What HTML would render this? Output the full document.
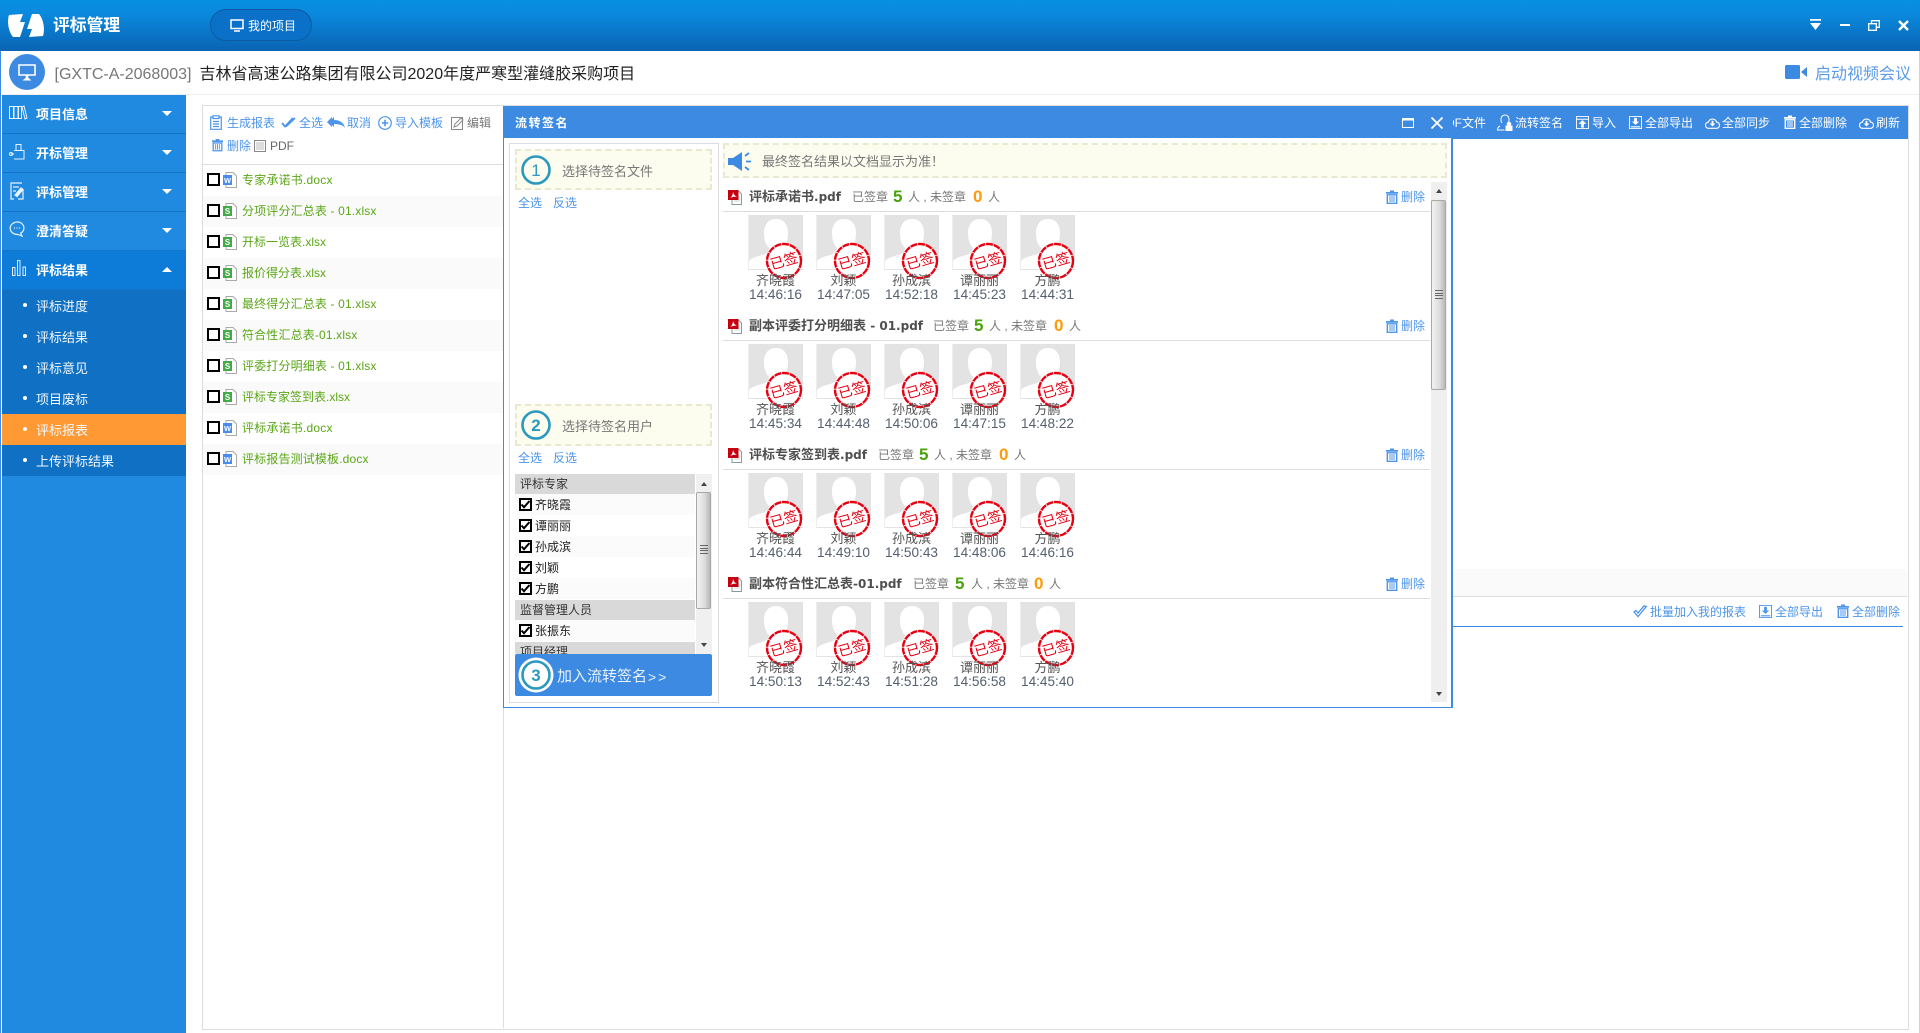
<!DOCTYPE html>
<html lang="zh"><head><meta charset="utf-8"><title>评标管理</title>
<style>
html,body{margin:0;padding:0}
body{position:relative;width:1920px;height:1033px;overflow:hidden;background:#fff;font-family:"Liberation Sans","Noto Sans CJK SC",sans-serif;font-size:12px;color:#555}
div,span,svg{position:absolute}
span.n,b.n,i.n{position:static}
.t{white-space:nowrap;line-height:16px;height:16px}
.w{color:#fff}.bl{color:#4c95ea}
svg{display:block;overflow:visible}
.m{left:2px;width:184px;height:38px;background:#2089e0;border-bottom:1px solid #1273c9}
.m .t{left:34px;top:12px;color:#fff;font-size:13px;font-weight:bold}
.m .a{left:160px;top:16px;width:0;height:0;border-left:5px solid transparent;border-right:5px solid transparent;border-top:5px solid #fff}
.m svg{left:7px;top:9px}
.s{left:2px;width:184px;height:31px;background:#0f70c4}
.s .t{left:34px;top:9px;color:#f2f8fd;font-size:13px}
.s:before{content:"";position:absolute;left:21px;top:13px;width:4px;height:4px;border-radius:50%;background:#fff}
.r{left:203px;width:300px;height:31px}
.r.e{background:#fafafa}
.cb{left:4px;top:8px;width:9px;height:9px;border:2px solid #000;background:#fff}
.r svg{left:20px;top:7px}
.r .t{left:39px;top:7px;color:#5ba616}
.st{color:#777;font-size:12px}
.sec{left:0;top:0;width:1920px;height:0}
.h{left:723px;top:14px;width:707px;height:1px;background:#ddd}
.tt{left:749px;top:-8px;color:#4f4f4f;font-size:13px;font-weight:bold}
.tt em{font:bold 12px "DejaVu Sans",sans-serif}
.g{color:#4aa30c;font-size:17px;font-weight:bold;top:-8px}
.o{color:#ff9a0a;font-size:17px;font-weight:bold;top:-8px}
.d{left:1401px;top:-8px;color:#4c95ea}
.p{top:18px;width:55px;height:90px}
.p .nm{left:-10px;width:75px;text-align:center;top:58px;font-size:13px;color:#555}
.p .tm{left:-10px;width:75px;text-align:center;top:72px;font-size:13.6px;color:#556070}
.ul{left:515px;width:180px;height:21px}
.gr{background:#d9d9d9;height:20px;color:#333}
.ul .t{left:20px;top:3px;color:#222}
.gr .t{left:5px;top:2px;color:#333}
.ul .c{left:4px;top:4px;width:9px;height:9px;border:2px solid #000;background:#fff}
.alt{background:#fbfbfb}
.yb{left:515px;width:193px;background:#fcfcef;border:2px dashed #e9e9d2}
.thumb{background:linear-gradient(90deg,#f2f2f2,#dedede 55%,#b9b9b9);border:1px solid #a8a8a8;border-radius:2px;box-sizing:border-box}
.grip{width:8px;height:7px;border-top:1px solid #666;border-bottom:1px solid #666}
.grip:after{content:"";position:absolute;left:0;top:2px;width:8px;height:1px;background:#666;box-shadow:0 2px 0 #666}
</style></head><body>
<svg width="0" height="0" style="left:0;top:0">
<defs>
<symbol id="ph" viewBox="0 0 55 55" overflow="visible"><rect width="55" height="55" fill="#e3e3e3"/><path d="M1 54V47c0-3 6-5 13-7 4-1 7-3 7-7-3-3-5-8-5-15 0-9 5-14 12-14s12 5 12 14c0 7-2 12-5 15 0 4 3 6 7 7 7 2 13 4 13 7v7z" fill="#fff"/><path d="M.5 55V.5" stroke="#eee"/></symbol>
<symbol id="tr" viewBox="0 0 12 14"><path d="M4 .5h4v1.500h4v1.800H0V2h4z" fill="currentColor"/><path d="M1.300 4.800h9.400V13.300H1.300z" fill="none" stroke="currentColor" stroke-width="1.400"/><path d="M4 6v6M6 6v6M8 6v6" stroke="currentColor"/></symbol>
<symbol id="pd" viewBox="0 0 14 16"><path d="M4 2.500h7l2.500 2.500v10.500H4z" fill="#fff" stroke="#8a9a9e"/><path d="M6 8h6M6 10h6M6 12h6" stroke="#c9d4d6"/><rect y="1" width="10.500" height="10" fill="#c40010"/><path d="M2 9c2-1 3-4 3-6.500 .5 3 2 4.500 4 5-2.500 0-5 .5-7 1.500z" fill="#fff"/></symbol>
<symbol id="xl" viewBox="0 0 14 16"><path d="M3 .5h7l3.500 3.500v11.500H3z" fill="#fff" stroke="#a9a9a9"/><rect y="3" width="9" height="10" fill="#41ab47"/><text x="4.500" y="11" font-size="8" font-weight="bold" text-anchor="middle" fill="#fff" font-family="Liberation Sans">S</text></symbol>
<symbol id="wd" viewBox="0 0 14 16"><path d="M3 .5h7l3.500 3.500v11.500H3z" fill="#fff" stroke="#a9a9a9"/><rect y="3" width="9" height="10" fill="#4a8bee"/><text x="4.500" y="11" font-size="7.500" font-weight="bold" text-anchor="middle" fill="#fff" font-family="Liberation Sans">W</text></symbol>
<symbol id="ex" viewBox="0 0 14 14"><path d="M.5.500h13v13H.5z" fill="none" stroke="currentColor"/><path d="M5.500 2h3v4H11L7 9.500 3 6h2.500zM2 11h10v1.200H2z" fill="currentColor"/></symbol>
<symbol id="cl" viewBox="0 0 16 13"><path d="M4 12.300a3.400 3.400 0 0 1-.4-6.800 4.600 4.600 0 0 1 8.800 0 3.400 3.400 0 0 1-.4 6.800z" fill="none" stroke="currentColor" stroke-width="1.200"/><path d="M7 4h2v3h2.200L8 10.300 4.800 7H7z" fill="currentColor"/></symbol>
</defs></svg>

<!-- top bar -->
<div style="left:0;top:0;width:1920px;height:51px;background:linear-gradient(#078fe2,#0a8ade 25%,#0a64b3)"></div>
<svg style="left:7px;top:13px" width="38" height="25" viewBox="0 0 38 25"><path d="M2 2 16 1 13 9 18 9 13 24 6 24C1 18 0 8 2 2z" fill="#fff"/><path d="M36 23 22 24 25 16 20 16 25 1 32 1C37 7 38 17 36 23z" fill="#fff"/></svg>
<div class="t w" style="left:53px;top:17px;font-size:16.800px;font-weight:bold;line-height:18px;height:18px">评标管理</div>
<div style="left:210px;top:9px;width:100px;height:30px;border:1px solid #0a5ba3;border-radius:16px;background:#0b71c8"></div>
<svg style="left:230px;top:19px" width="14" height="13" viewBox="0 0 14 13"><path d="M1 1h12v8.500H1z" fill="none" stroke="#fff" stroke-width="1.500"/><path d="M4 12h6" stroke="#fff" stroke-width="1.500"/></svg>
<div class="t w" style="left:248px;top:18px">我的项目</div>
<svg style="left:1810px;top:19px" width="11" height="12" viewBox="0 0 11 12"><path d="M0 0h11v1.800H0zM0 4h11L5.500 11z" fill="#fff"/></svg>
<div style="left:1840px;top:24px;width:10px;height:2px;background:#fff"></div>
<svg style="left:1868px;top:20px" width="12" height="11" viewBox="0 0 12 11"><path d="M.7 3.700h7.600v6.600H.7zM3.500 3.500V.7h7.800v6.600H8.500" fill="none" stroke="#fff" stroke-width="1.300"/></svg>
<svg style="left:1898px;top:20px" width="11" height="11" viewBox="0 0 11 11"><path d="M1 1l9 9M10 1l-9 9" stroke="#fff" stroke-width="2.400"/></svg>

<!-- subheader -->
<div style="left:0;top:51px;width:1px;height:982px;background:#3d8ae2"></div>
<div style="left:1919px;top:51px;width:1px;height:982px;background:#bcd6f3"></div>
<div style="left:2px;top:94px;width:1917px;height:1px;background:#eee"></div>
<div style="left:9px;top:54px;width:36px;height:36px;border-radius:50%;background:#3d8ae2"></div>
<svg style="left:18px;top:64px" width="18" height="18" viewBox="0 0 18 18"><path d="M1 1h16v10H1z" fill="none" stroke="#fff" stroke-width="1.600"/><path d="M8 11h2l.5 3 3 2.500h-9l3-2.500z" fill="#fff"/></svg>
<div class="t" style="left:54.500px;top:66px;font-size:16px;color:#777;line-height:18px;height:18px">[GXTC-A-2068003]</div>
<div class="t" style="left:199.500px;top:66px;font-size:16px;color:#222;line-height:18px;height:18px">吉林省高速公路集团有限公司2020年度严寒型灌缝胶采购项目</div>
<svg style="left:1785px;top:65px" width="22" height="14" viewBox="0 0 22 14"><rect width="15" height="14" rx="1.500" fill="#3d8ae2"/><path d="M16 7l6-5v10z" fill="#3d8ae2"/></svg>
<div class="t" style="left:1815px;top:66px;font-size:16px;color:#5b9be8;line-height:18px;height:18px">启动视频会议</div>

<!-- sidebar -->
<div style="left:2px;top:95px;width:184px;height:938px;background:#2089e0"></div>
<div class="m" style="top:95px"><div class="t">项目信息</div><div class="a"></div><svg width="18" height="16" viewBox="0 0 18 16" fill="none" stroke="#e8f2fc"><path d="M.5 2.500h4v12h-4zM5 2.500h4v12H5zM9.500 2.500h3v12h-3zM13 3l2-1 3 12-2 1z"/></svg></div>
<div class="m" style="top:134px"><div class="t">开标管理</div><div class="a"></div><svg width="18" height="18" viewBox="0 0 18 18" fill="none" stroke="#e8f2fc"><path d="M7 7V1.500h5V7M5 7.500h10v8.500H5M5 11H2"/><circle cx="2" cy="11" r="1.500"/></svg></div>
<div class="m" style="top:173px"><div class="t">评标管理</div><div class="a"></div><svg width="14" height="18" viewBox="0 0 14 18" style="left:8px" fill="none" stroke="#e8f2fc" stroke-width="1.200"><path d="M12 1H1v16h3M13 7v10H8"/><path d="M5 13l6-7 2 1.500-6 7z" fill="#e8f2fc"/><path d="M3 5h6M3 9h3"/></svg></div>
<div class="m" style="top:212px"><div class="t">澄清答疑</div><div class="a"></div><svg width="16" height="16" viewBox="0 0 16 16" fill="none" stroke="#e8f2fc" stroke-width="1.200"><path d="M8 1a7 6 0 1 0 1 12.500l4 1.500-1.300-2.800A6.500 6 0 0 0 8 1z"/><path d="M5 7h1M7.500 7h1M10 7h1"/></svg></div>
<div class="m" style="top:251px;background:#0d7bd8"><div class="t">评标结果</div><div class="a" style="border-top:0;border-bottom:5px solid #fff"></div><svg width="14" height="16" viewBox="0 0 14 16" style="left:10px" fill="none" stroke="#dcecfb"><path d="M.5 7.500h2.500v8H.5zM5.500 .5H8v15H5.500zM11 7h2.500v8.500H11z"/></svg></div>
<div class="s" style="top:290px"><div class="t">评标进度</div></div>
<div class="s" style="top:321px"><div class="t">评标结果</div></div>
<div class="s" style="top:352px"><div class="t">评标意见</div></div>
<div class="s" style="top:383px"><div class="t">项目废标</div></div>
<div class="s" style="top:414px;background:#ff9933"><div class="t">评标报表</div></div>
<div class="s" style="top:445px"><div class="t">上传评标结果</div></div>

<!-- main panel -->
<div style="left:202px;top:105px;width:1705px;height:923px;border:1px solid #ddd"></div>
<div style="left:503px;top:139px;width:1px;height:889px;background:#ddd"></div>
<div style="left:203px;top:164px;width:300px;height:1px;background:#ddd"></div>
<div style="left:1453px;top:106px;width:455px;height:33px;background:#3d8ae2"></div>
<div class="t w" style="left:1453px;top:115px;width:33px;overflow:hidden;text-align:right;direction:rtl">PDF文件</div>
<svg style="left:1497px;top:114px" width="16" height="17" viewBox="0 0 16 17" fill="none" stroke="#fff"><path d="M3 12C1 13 .5 15 .5 16h7M5 9C3 6 4 1 8 1s5 5 3 8"/><path d="M9 12h6v4.500H9z" fill="#fff"/><circle cx="12" cy="10" r="1.800" fill="#fff"/></svg>
<div class="t w" style="left:1515px;top:115px">流转签名</div>
<svg style="left:1576px;top:116px;color:#fff" width="13" height="13" viewBox="0 0 14 14" fill="none" stroke="#fff"><path d="M.5.500h13v13H.5zM1 3.500h12"/><path d="M7 5l3 3H8v4H6V8H4z" fill="#fff"/></svg>
<div class="t w" style="left:1592px;top:115px">导入</div>
<svg style="left:1629px;top:116px;color:#fff" width="13" height="13"><use href="#ex"/></svg>
<div class="t w" style="left:1645px;top:115px">全部导出</div>
<svg style="left:1705px;top:117px;color:#fff" width="15" height="12"><use href="#cl"/></svg>
<div class="t w" style="left:1722px;top:115px">全部同步</div>
<svg style="left:1784px;top:115px;color:#fff" width="12" height="14"><use href="#tr"/></svg>
<div class="t w" style="left:1799px;top:115px">全部删除</div>
<svg style="left:1859px;top:117px;color:#fff" width="15" height="12"><use href="#cl"/></svg>
<div class="t w" style="left:1876px;top:115px">刷新</div>

<!-- right below modal -->
<div style="left:1452px;top:569px;width:455px;height:27px;background:#fafafa"></div>
<div style="left:1452px;top:596px;width:455px;height:1px;background:#ddd"></div>
<svg style="left:1633px;top:605px" width="14" height="13" viewBox="0 0 14 13" fill="none" stroke="#4c95ea" stroke-width="1.300"><path d="M1 7l4 4.500L13.300 1.500 11 .9 5 8 3 5.500z"/></svg>
<div class="t bl" style="left:1650px;top:604px">批量加入我的报表</div>
<svg style="left:1759px;top:605px;color:#4c95ea" width="13" height="13"><use href="#ex"/></svg>
<div class="t bl" style="left:1775px;top:604px">全部导出</div>
<svg style="left:1837px;top:604px;color:#4c95ea" width="12" height="14"><use href="#tr"/></svg>
<div class="t bl" style="left:1852px;top:604px">全部删除</div>
<div style="left:1452px;top:626px;width:451px;height:1px;background:#3d8ae2"></div>

<!-- left file list -->
<svg style="left:210px;top:115px;color:#4c95ea" width="12" height="15" viewBox="0 0 12 15" fill="none" stroke="#4c95ea" stroke-width="1.200"><path d="M3 2H.7v12.300h10.600V2H9M3 .8h6v2.700H3zM3 6.500h6M3 9h6M3 11.500h6"/></svg>
<div class="t bl" style="left:227px;top:115px">生成报表</div>
<svg style="left:281px;top:117px" width="15" height="11" viewBox="0 0 15 11" fill="none" stroke="#4c95ea" stroke-width="1.800"><path d="M1 6l3 3.500L12 1M5 9.500L14 1"/></svg>
<div class="t bl" style="left:299px;top:115px">全选</div>
<svg style="left:329px;top:117px" width="16" height="11" viewBox="0 0 16 11"><path d="M5 0v3c6 0 10 3 11 8-2-3-6-4-11-4v3L0 5z" fill="#4c95ea"/><path d="M3 0v2L1 5l2 3v2L-2 5z" fill="#4c95ea"/></svg>
<div class="t bl" style="left:347px;top:115px">取消</div>
<svg style="left:378px;top:116px" width="14" height="14" viewBox="0 0 14 14" fill="none" stroke="#4c95ea" stroke-width="1.200"><circle cx="7" cy="7" r="6.300"/><path d="M3.800 7h6.400M7 3.800v6.400" stroke-width="1.600"/></svg>
<div class="t bl" style="left:395px;top:115px">导入模板</div>
<svg style="left:451px;top:116px" width="13" height="14" viewBox="0 0 13 14" fill="none" stroke="#888"><path d="M.5 1.500h11v12H.5z"/><path d="M3 11l1-3 6-6 2 2-6 6z" fill="#fff"/></svg>
<div class="t" style="left:467px;top:115px;color:#777">编辑</div>
<svg style="left:212px;top:138px;color:#4c95ea" width="11" height="14"><use href="#tr"/></svg>
<div class="t bl" style="left:227px;top:138px">删除</div>
<div style="left:254px;top:140px;width:10px;height:10px;border:1px solid #888;background:#ddd;box-shadow:inset 0 0 0 1px #fff"></div>
<div class="t" style="left:270px;top:138px;color:#666">PDF</div>

<div class="r" style="top:165px"><div class="cb"></div><svg width="14" height="16"><use href="#wd"/></svg><div class="t" style="letter-spacing:.2px">专家承诺书.docx</div></div>
<div class="r e" style="top:196px"><div class="cb"></div><svg width="14" height="16"><use href="#xl"/></svg><div class="t" style="letter-spacing:.15px">分项评分汇总表 - 01.xlsx</div></div>
<div class="r" style="top:227px"><div class="cb"></div><svg width="14" height="16"><use href="#xl"/></svg><div class="t">开标一览表.xlsx</div></div>
<div class="r e" style="top:258px"><div class="cb"></div><svg width="14" height="16"><use href="#xl"/></svg><div class="t">报价得分表.xlsx</div></div>
<div class="r" style="top:289px"><div class="cb"></div><svg width="14" height="16"><use href="#xl"/></svg><div class="t" style="letter-spacing:.15px">最终得分汇总表 - 01.xlsx</div></div>
<div class="r e" style="top:320px"><div class="cb"></div><svg width="14" height="16"><use href="#xl"/></svg><div class="t" style="letter-spacing:.15px">符合性汇总表-01.xlsx</div></div>
<div class="r" style="top:351px"><div class="cb"></div><svg width="14" height="16"><use href="#xl"/></svg><div class="t" style="letter-spacing:.15px">评委打分明细表 - 01.xlsx</div></div>
<div class="r e" style="top:382px"><div class="cb"></div><svg width="14" height="16"><use href="#xl"/></svg><div class="t">评标专家签到表.xlsx</div></div>
<div class="r" style="top:413px"><div class="cb"></div><svg width="14" height="16"><use href="#wd"/></svg><div class="t" style="letter-spacing:.2px">评标承诺书.docx</div></div>
<div class="r e" style="top:444px"><div class="cb"></div><svg width="14" height="16"><use href="#wd"/></svg><div class="t" style="letter-spacing:.15px">评标报告测试模板.docx</div></div>

<!-- modal -->
<div style="left:503px;top:106px;width:947px;height:600px;background:#fff;border:1px solid #3d8ae2;border-right-width:2px"></div>
<div style="left:503px;top:106px;width:950px;height:32px;background:#3d8ae2"></div>
<div class="t w" style="left:515px;top:115px;font-weight:bold;letter-spacing:1.500px">流转签名</div>
<svg style="left:1402px;top:118px" width="12" height="10" viewBox="0 0 12 10" fill="none" stroke="#fff"><path d="M.5.500h11v9H.5z"/><path d="M0 1.500h12" stroke-width="2"/></svg>
<svg style="left:1431px;top:117px" width="12" height="12" viewBox="0 0 12 12"><path d="M.5.500l11 11M11.500.5l-11 11" stroke="#fff" stroke-width="1.800"/></svg>

<div style="left:509px;top:143px;width:208px;height:558px;border:1px solid #ddd"></div>
<div class="yb" style="top:149px;height:37px"></div>
<svg style="left:521px;top:155px" width="30" height="30" viewBox="0 0 30 30"><circle cx="15" cy="15" r="13.500" fill="none" stroke="#2b98bd" stroke-width="2.600"/><text x="15" y="21" text-anchor="middle" font-size="17" fill="#2b98bd" font-family="Liberation Sans">1</text></svg>
<div class="t" style="left:562px;top:164px;font-size:13px;color:#777">选择待签名文件</div>
<div class="t bl" style="left:518px;top:195px">全选</div>
<div class="t bl" style="left:553px;top:195px">反选</div>
<div class="yb" style="top:404px;height:38px"></div>
<svg style="left:521px;top:410px" width="30" height="30" viewBox="0 0 30 30"><circle cx="15" cy="15" r="13.500" fill="none" stroke="#2b98bd" stroke-width="2.600"/><text x="15" y="21" text-anchor="middle" font-size="17" font-weight="bold" fill="#2b98bd" font-family="Liberation Sans">2</text></svg>
<div class="t" style="left:562px;top:419px;font-size:13px;color:#777">选择待签名用户</div>
<div class="t bl" style="left:518px;top:450px">全选</div>
<div class="t bl" style="left:553px;top:450px">反选</div>

<div style="left:515px;top:474px;width:197px;height:180px;overflow:hidden">
<div class="ul gr" style="left:0;top:0"><div class="t">评标专家</div></div>
<div class="ul alt" style="left:0;top:20px"><div class="c"></div><svg style="left:5px;top:5px" width="11" height="11" viewBox="0 0 11 11"><path d="M1.500 5.500l2.500 2.700L9.500 2" fill="none" stroke="#000" stroke-width="2"/></svg><div class="t">齐晓霞</div></div>
<div class="ul" style="left:0;top:41px"><div class="c"></div><svg style="left:5px;top:5px" width="11" height="11" viewBox="0 0 11 11"><path d="M1.500 5.500l2.500 2.700L9.500 2" fill="none" stroke="#000" stroke-width="2"/></svg><div class="t">谭丽丽</div></div>
<div class="ul alt" style="left:0;top:62px"><div class="c"></div><svg style="left:5px;top:5px" width="11" height="11" viewBox="0 0 11 11"><path d="M1.500 5.500l2.500 2.700L9.500 2" fill="none" stroke="#000" stroke-width="2"/></svg><div class="t">孙成滨</div></div>
<div class="ul" style="left:0;top:83px"><div class="c"></div><svg style="left:5px;top:5px" width="11" height="11" viewBox="0 0 11 11"><path d="M1.500 5.500l2.500 2.700L9.500 2" fill="none" stroke="#000" stroke-width="2"/></svg><div class="t">刘颖</div></div>
<div class="ul alt" style="left:0;top:104px"><div class="c"></div><svg style="left:5px;top:5px" width="11" height="11" viewBox="0 0 11 11"><path d="M1.500 5.500l2.500 2.700L9.500 2" fill="none" stroke="#000" stroke-width="2"/></svg><div class="t">方鹏</div></div>
<div class="ul gr" style="left:0;top:126px"><div class="t">监督管理人员</div></div>
<div class="ul alt" style="left:0;top:146px"><div class="c"></div><svg style="left:5px;top:5px" width="11" height="11" viewBox="0 0 11 11"><path d="M1.500 5.500l2.500 2.700L9.500 2" fill="none" stroke="#000" stroke-width="2"/></svg><div class="t">张振东</div></div>
<div class="ul gr" style="left:0;top:168px"><div class="t">项目经理</div></div>
<div style="left:181px;top:0;width:16px;height:180px;background:#f0f0f0"></div>
<div style="left:186px;top:8px;width:0;height:0;border-left:3.500px solid transparent;border-right:3.500px solid transparent;border-bottom:4px solid #444"></div>
<div class="thumb" style="left:181px;top:18px;width:15px;height:117px"></div>
<div class="grip" style="left:185px;top:71px"></div>
<div style="left:186px;top:169px;width:0;height:0;border-left:3.500px solid transparent;border-right:3.500px solid transparent;border-top:4px solid #444"></div>
</div>

<div style="left:515px;top:654px;width:197px;height:42px;background:#3d8ae2;border-radius:2px"></div>
<svg style="left:518px;top:657px" width="36" height="36" viewBox="0 0 36 36"><circle cx="18" cy="18" r="17.500" fill="#fff"/><circle cx="18" cy="18" r="13.500" fill="#fff" stroke="#2b98bd" stroke-width="2.600"/><text x="18" y="24" text-anchor="middle" font-size="17" font-weight="bold" fill="#2b98bd" font-family="Liberation Sans">3</text></svg>
<div class="t" style="left:557px;top:668px;font-size:15px;color:#e9f2fd;line-height:18px;height:18px">加入流转签名</div>
<div class="t" style="left:648px;top:668px;font-size:14px;letter-spacing:2px;color:#e9f2fd;line-height:18px;height:18px">&gt;&gt;</div>

<!-- notice -->
<div style="left:723px;top:143px;width:720px;height:31px;background:#fcfcef;border:2px dashed #e9e9d2"></div>
<svg style="left:728px;top:152px" width="24" height="19" viewBox="0 0 24 19"><path d="M0 6h5l9-6v19L5 13H0z" fill="#3d8ae2"/><path d="M17 4l4-3M18 9.500h5M17 15l4 3" stroke="#3d8ae2" stroke-width="1.800"/></svg>
<div class="t" style="left:762px;top:154px;font-size:13px;color:#777">最终签名结果以文档显示为准！</div>

<!-- sign list scrollbar -->
<div style="left:1431px;top:182px;width:16px;height:520px;background:#efefef"></div>
<div style="left:1436px;top:189px;width:0;height:0;border-left:3.500px solid transparent;border-right:3.500px solid transparent;border-bottom:4px solid #444"></div>
<div class="thumb" style="left:1431px;top:200px;width:15px;height:190px"></div>
<div class="grip" style="left:1435px;top:290px"></div>
<div style="left:1436px;top:692px;width:0;height:0;border-left:3.500px solid transparent;border-right:3.500px solid transparent;border-top:4px solid #444"></div>

<!-- section 1 -->
<div class="sec" style="top:197px">
<svg style="left:728px;top:-8px" width="14" height="16"><use href="#pd"/></svg>
<div class="t tt">评标承诺书<em class="n">.pdf</em></div>
<div class="t st" style="left:852px;top:-8px">已签章</div><div class="t g" style="left:893px">5</div><div class="t st" style="left:908px;top:-8px">人 , 未签章</div><div class="t o" style="left:973px">0</div><div class="t st" style="left:988px;top:-8px">人</div>
<svg style="left:1386px;top:-7px;color:#4c95ea" width="12" height="14"><use href="#tr"/></svg><div class="t d">删除</div>
<div class="h"></div>
<div class="p" style="left:748px"><svg width="55" height="55"><use href="#ph"/><circle cx="36" cy="46" r="17" fill="#fff" stroke="#e60012" stroke-width="2.400" stroke-dasharray="7 .8"/><text x="36" y="51" text-anchor="middle" font-size="14" fill="#e60012" transform="rotate(-16 36 46)">已签</text></svg><div class="t nm">齐晓霞</div><div class="t tm">14:46:16</div></div>
<div class="p" style="left:816px"><svg width="55" height="55"><use href="#ph"/><circle cx="36" cy="46" r="17" fill="#fff" stroke="#e60012" stroke-width="2.400" stroke-dasharray="7 .8"/><text x="36" y="51" text-anchor="middle" font-size="14" fill="#e60012" transform="rotate(-16 36 46)">已签</text></svg><div class="t nm">刘颖</div><div class="t tm">14:47:05</div></div>
<div class="p" style="left:884px"><svg width="55" height="55"><use href="#ph"/><circle cx="36" cy="46" r="17" fill="#fff" stroke="#e60012" stroke-width="2.400" stroke-dasharray="7 .8"/><text x="36" y="51" text-anchor="middle" font-size="14" fill="#e60012" transform="rotate(-16 36 46)">已签</text></svg><div class="t nm">孙成滨</div><div class="t tm">14:52:18</div></div>
<div class="p" style="left:952px"><svg width="55" height="55"><use href="#ph"/><circle cx="36" cy="46" r="17" fill="#fff" stroke="#e60012" stroke-width="2.400" stroke-dasharray="7 .8"/><text x="36" y="51" text-anchor="middle" font-size="14" fill="#e60012" transform="rotate(-16 36 46)">已签</text></svg><div class="t nm">谭丽丽</div><div class="t tm">14:45:23</div></div>
<div class="p" style="left:1020px"><svg width="55" height="55"><use href="#ph"/><circle cx="36" cy="46" r="17" fill="#fff" stroke="#e60012" stroke-width="2.400" stroke-dasharray="7 .8"/><text x="36" y="51" text-anchor="middle" font-size="14" fill="#e60012" transform="rotate(-16 36 46)">已签</text></svg><div class="t nm">方鹏</div><div class="t tm">14:44:31</div></div>
</div>

<!-- section 2 -->
<div class="sec" style="top:326px">
<svg style="left:728px;top:-8px" width="14" height="16"><use href="#pd"/></svg>
<div class="t tt">副本评委打分明细表<em class="n"> - 01.pdf</em></div>
<div class="t st" style="left:933px;top:-8px">已签章</div><div class="t g" style="left:974px">5</div><div class="t st" style="left:989px;top:-8px">人 , 未签章</div><div class="t o" style="left:1054px">0</div><div class="t st" style="left:1069px;top:-8px">人</div>
<svg style="left:1386px;top:-7px;color:#4c95ea" width="12" height="14"><use href="#tr"/></svg><div class="t d">删除</div>
<div class="h"></div>
<div class="p" style="left:748px"><svg width="55" height="55"><use href="#ph"/><circle cx="36" cy="46" r="17" fill="#fff" stroke="#e60012" stroke-width="2.400" stroke-dasharray="7 .8"/><text x="36" y="51" text-anchor="middle" font-size="14" fill="#e60012" transform="rotate(-16 36 46)">已签</text></svg><div class="t nm">齐晓霞</div><div class="t tm">14:45:34</div></div>
<div class="p" style="left:816px"><svg width="55" height="55"><use href="#ph"/><circle cx="36" cy="46" r="17" fill="#fff" stroke="#e60012" stroke-width="2.400" stroke-dasharray="7 .8"/><text x="36" y="51" text-anchor="middle" font-size="14" fill="#e60012" transform="rotate(-16 36 46)">已签</text></svg><div class="t nm">刘颖</div><div class="t tm">14:44:48</div></div>
<div class="p" style="left:884px"><svg width="55" height="55"><use href="#ph"/><circle cx="36" cy="46" r="17" fill="#fff" stroke="#e60012" stroke-width="2.400" stroke-dasharray="7 .8"/><text x="36" y="51" text-anchor="middle" font-size="14" fill="#e60012" transform="rotate(-16 36 46)">已签</text></svg><div class="t nm">孙成滨</div><div class="t tm">14:50:06</div></div>
<div class="p" style="left:952px"><svg width="55" height="55"><use href="#ph"/><circle cx="36" cy="46" r="17" fill="#fff" stroke="#e60012" stroke-width="2.400" stroke-dasharray="7 .8"/><text x="36" y="51" text-anchor="middle" font-size="14" fill="#e60012" transform="rotate(-16 36 46)">已签</text></svg><div class="t nm">谭丽丽</div><div class="t tm">14:47:15</div></div>
<div class="p" style="left:1020px"><svg width="55" height="55"><use href="#ph"/><circle cx="36" cy="46" r="17" fill="#fff" stroke="#e60012" stroke-width="2.400" stroke-dasharray="7 .8"/><text x="36" y="51" text-anchor="middle" font-size="14" fill="#e60012" transform="rotate(-16 36 46)">已签</text></svg><div class="t nm">方鹏</div><div class="t tm">14:48:22</div></div>
</div>

<!-- section 3 -->
<div class="sec" style="top:455px">
<svg style="left:728px;top:-8px" width="14" height="16"><use href="#pd"/></svg>
<div class="t tt">评标专家签到表<em class="n">.pdf</em></div>
<div class="t st" style="left:878px;top:-8px">已签章</div><div class="t g" style="left:919px">5</div><div class="t st" style="left:934px;top:-8px">人 , 未签章</div><div class="t o" style="left:999px">0</div><div class="t st" style="left:1014px;top:-8px">人</div>
<svg style="left:1386px;top:-7px;color:#4c95ea" width="12" height="14"><use href="#tr"/></svg><div class="t d">删除</div>
<div class="h"></div>
<div class="p" style="left:748px"><svg width="55" height="55"><use href="#ph"/><circle cx="36" cy="46" r="17" fill="#fff" stroke="#e60012" stroke-width="2.400" stroke-dasharray="7 .8"/><text x="36" y="51" text-anchor="middle" font-size="14" fill="#e60012" transform="rotate(-16 36 46)">已签</text></svg><div class="t nm">齐晓霞</div><div class="t tm">14:46:44</div></div>
<div class="p" style="left:816px"><svg width="55" height="55"><use href="#ph"/><circle cx="36" cy="46" r="17" fill="#fff" stroke="#e60012" stroke-width="2.400" stroke-dasharray="7 .8"/><text x="36" y="51" text-anchor="middle" font-size="14" fill="#e60012" transform="rotate(-16 36 46)">已签</text></svg><div class="t nm">刘颖</div><div class="t tm">14:49:10</div></div>
<div class="p" style="left:884px"><svg width="55" height="55"><use href="#ph"/><circle cx="36" cy="46" r="17" fill="#fff" stroke="#e60012" stroke-width="2.400" stroke-dasharray="7 .8"/><text x="36" y="51" text-anchor="middle" font-size="14" fill="#e60012" transform="rotate(-16 36 46)">已签</text></svg><div class="t nm">孙成滨</div><div class="t tm">14:50:43</div></div>
<div class="p" style="left:952px"><svg width="55" height="55"><use href="#ph"/><circle cx="36" cy="46" r="17" fill="#fff" stroke="#e60012" stroke-width="2.400" stroke-dasharray="7 .8"/><text x="36" y="51" text-anchor="middle" font-size="14" fill="#e60012" transform="rotate(-16 36 46)">已签</text></svg><div class="t nm">谭丽丽</div><div class="t tm">14:48:06</div></div>
<div class="p" style="left:1020px"><svg width="55" height="55"><use href="#ph"/><circle cx="36" cy="46" r="17" fill="#fff" stroke="#e60012" stroke-width="2.400" stroke-dasharray="7 .8"/><text x="36" y="51" text-anchor="middle" font-size="14" fill="#e60012" transform="rotate(-16 36 46)">已签</text></svg><div class="t nm">方鹏</div><div class="t tm">14:46:16</div></div>
</div>

<!-- section 4 -->
<div class="sec" style="top:584px">
<svg style="left:728px;top:-8px" width="14" height="16"><use href="#pd"/></svg>
<div class="t tt">副本符合性汇总表<em class="n">-01.pdf</em></div>
<div class="t st" style="left:913px;top:-8px">已签章</div><div class="t g" style="left:955px">5</div><div class="t st" style="left:971px;top:-8px">人 , 未签章</div><div class="t o" style="left:1034px">0</div><div class="t st" style="left:1049px;top:-8px">人</div>
<svg style="left:1386px;top:-7px;color:#4c95ea" width="12" height="14"><use href="#tr"/></svg><div class="t d">删除</div>
<div class="h"></div>
<div class="p" style="left:748px"><svg width="55" height="55"><use href="#ph"/><circle cx="36" cy="46" r="17" fill="#fff" stroke="#e60012" stroke-width="2.400" stroke-dasharray="7 .8"/><text x="36" y="51" text-anchor="middle" font-size="14" fill="#e60012" transform="rotate(-16 36 46)">已签</text></svg><div class="t nm">齐晓霞</div><div class="t tm">14:50:13</div></div>
<div class="p" style="left:816px"><svg width="55" height="55"><use href="#ph"/><circle cx="36" cy="46" r="17" fill="#fff" stroke="#e60012" stroke-width="2.400" stroke-dasharray="7 .8"/><text x="36" y="51" text-anchor="middle" font-size="14" fill="#e60012" transform="rotate(-16 36 46)">已签</text></svg><div class="t nm">刘颖</div><div class="t tm">14:52:43</div></div>
<div class="p" style="left:884px"><svg width="55" height="55"><use href="#ph"/><circle cx="36" cy="46" r="17" fill="#fff" stroke="#e60012" stroke-width="2.400" stroke-dasharray="7 .8"/><text x="36" y="51" text-anchor="middle" font-size="14" fill="#e60012" transform="rotate(-16 36 46)">已签</text></svg><div class="t nm">孙成滨</div><div class="t tm">14:51:28</div></div>
<div class="p" style="left:952px"><svg width="55" height="55"><use href="#ph"/><circle cx="36" cy="46" r="17" fill="#fff" stroke="#e60012" stroke-width="2.400" stroke-dasharray="7 .8"/><text x="36" y="51" text-anchor="middle" font-size="14" fill="#e60012" transform="rotate(-16 36 46)">已签</text></svg><div class="t nm">谭丽丽</div><div class="t tm">14:56:58</div></div>
<div class="p" style="left:1020px"><svg width="55" height="55"><use href="#ph"/><circle cx="36" cy="46" r="17" fill="#fff" stroke="#e60012" stroke-width="2.400" stroke-dasharray="7 .8"/><text x="36" y="51" text-anchor="middle" font-size="14" fill="#e60012" transform="rotate(-16 36 46)">已签</text></svg><div class="t nm">方鹏</div><div class="t tm">14:45:40</div></div>
</div>
</body></html>
